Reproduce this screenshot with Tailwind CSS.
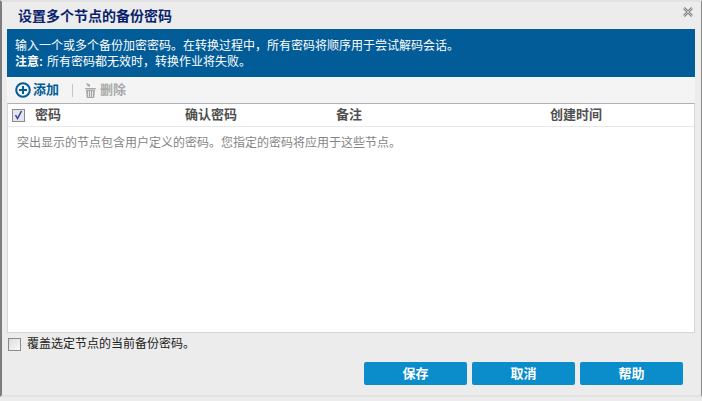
<!DOCTYPE html>
<html lang="zh-CN">
<head>
    <meta charset="UTF-8">
    <title>设置多个节点的备份密码</title>
    <script src="https://cdn.jsdelivr.net/npm/@tailwindcss/browser@4"></script>
</head>
<body class="w-[702px] h-[401px] overflow-hidden bg-[#ececec] font-['Liberation_Sans','Noto_Sans_CJK_SC',sans-serif] text-[12px]">
    <div class="relative flex h-[397px] flex-col border-t-2 border-l-2 border-r border-b-2 border-t-[#e2e2e2] border-l-[#7d7d7d] border-r-[#8a8a8a] border-b-[#e2e2e2] pl-[5px] pr-[6px]">
        <!-- title -->
        <div class="flex h-[27px] shrink-0 items-center pl-[11px] pt-[1px] text-[14px] font-bold text-[#0a1f6b]">设置多个节点的备份密码</div>
        <button class="absolute top-[5px] right-[8px]">
            <svg class="block" width="10" height="10" viewBox="0 0 10 10" fill="none"><path d="M1 1l8 8M9 1l-8 8" stroke="#808080" stroke-width="2.600"/><path d="M1 1l8 8M9 1l-8 8" stroke="#e4e4e4" stroke-width=".8"/></svg>
        </button>

        <!-- info -->
        <div class="h-[48px] shrink-0 bg-[#025c98] pl-[8px] pt-[9px] text-[12px] leading-[16px] text-white">
            <p>输入一个或多个备份加密密码。在转换过程中，所有密码将顺序用于尝试解码会话。</p>
            <p><b>注意:</b><span class="ml-[4px]">所有密码都无效时，转换作业将失败。</span></p>
        </div>

        <!-- toolbar -->
        <div class="flex h-[26px] shrink-0 items-center bg-[#f4f4f4] pl-[8px] text-[13px]">
            <svg width="16" height="16" viewBox="0 0 16 16" fill="none" stroke="#025c98"><circle cx="8" cy="8" r="6.800" stroke-width="2"/><path d="M4 8h8M8 4v8" stroke-width="2"/></svg>
            <span class="ml-[2px] font-bold text-[#025c98]">添加</span>
            <span class="ml-[13px] h-[13px] w-px bg-[#c4c4c4]"></span>
            <svg class="ml-[11px]" width="13" height="17" viewBox="0 0 13 17" fill="#a8a8a8"><path d="M2 1l4 1.500 0 2.500-2.500-1zM1 6h11l-.5 1.500H1.500zM2 8h9l-.8 8H2.800z"/><path d="M4.500 9v6M6.500 9v6M8.500 9v6" stroke="#f4f4f4" stroke-width=".8"/></svg>
            <span class="ml-[3px] font-bold text-[#a9a9a9]">删除</span>
        </div>

        <!-- table -->
        <div class="flex min-h-0 flex-1 flex-col border border-t-[#b0b0b8] border-x-[#d2d6de] border-b-[#d2d6de] bg-white">
            <div class="grid h-[23px] shrink-0 grid-cols-[27px_150px_151px_214px_1fr] items-center border-b border-[#e8e8e8] text-[13px] font-bold text-[#505050]">
                <span class="ml-[4px] flex size-[13px] items-center justify-center border border-[#8a8a8a] bg-[#e4e4ee]">
                    <svg width="9" height="10" viewBox="0 0 9 10" fill="none" stroke="#34409c" stroke-width="1.500"><path d="M1.500 5l2 3.500L7.500 1"/></svg>
                </span>
                <span>密码</span>
                <span>确认密码</span>
                <span>备注</span>
                <span>创建时间</span>
            </div>
            <p class="pl-[9px] pt-[8px] leading-[16px] text-[#858585]">突出显示的节点包含用户定义的密码。您指定的密码将应用于这些节点。</p>
        </div>

        <!-- options -->
        <label class="mt-[3px] flex h-[16px] shrink-0 items-center pl-[1px] text-[#202020]">
            <span class="size-[13px] border border-[#8a8a8a] bg-gradient-to-br from-[#dcdcdc] to-[#fafafa]"></span>
            <span class="ml-[6px]">覆盖选定节点的当前备份密码。</span>
        </label>

        <!-- buttons -->
        <div class="mt-[10px] mb-[10px] flex shrink-0 justify-end gap-[5px] pr-[12px] text-[13px]">
            <button class="h-[23px] w-[103px] rounded-[2px] bg-[#0b8dcb] font-bold text-white">保存</button>
            <button class="h-[23px] w-[103px] rounded-[2px] bg-[#0b8dcb] font-bold text-white">取消</button>
            <button class="h-[23px] w-[103px] rounded-[2px] bg-[#0b8dcb] font-bold text-white">帮助</button>
        </div>
    </div>
</body>
</html>
